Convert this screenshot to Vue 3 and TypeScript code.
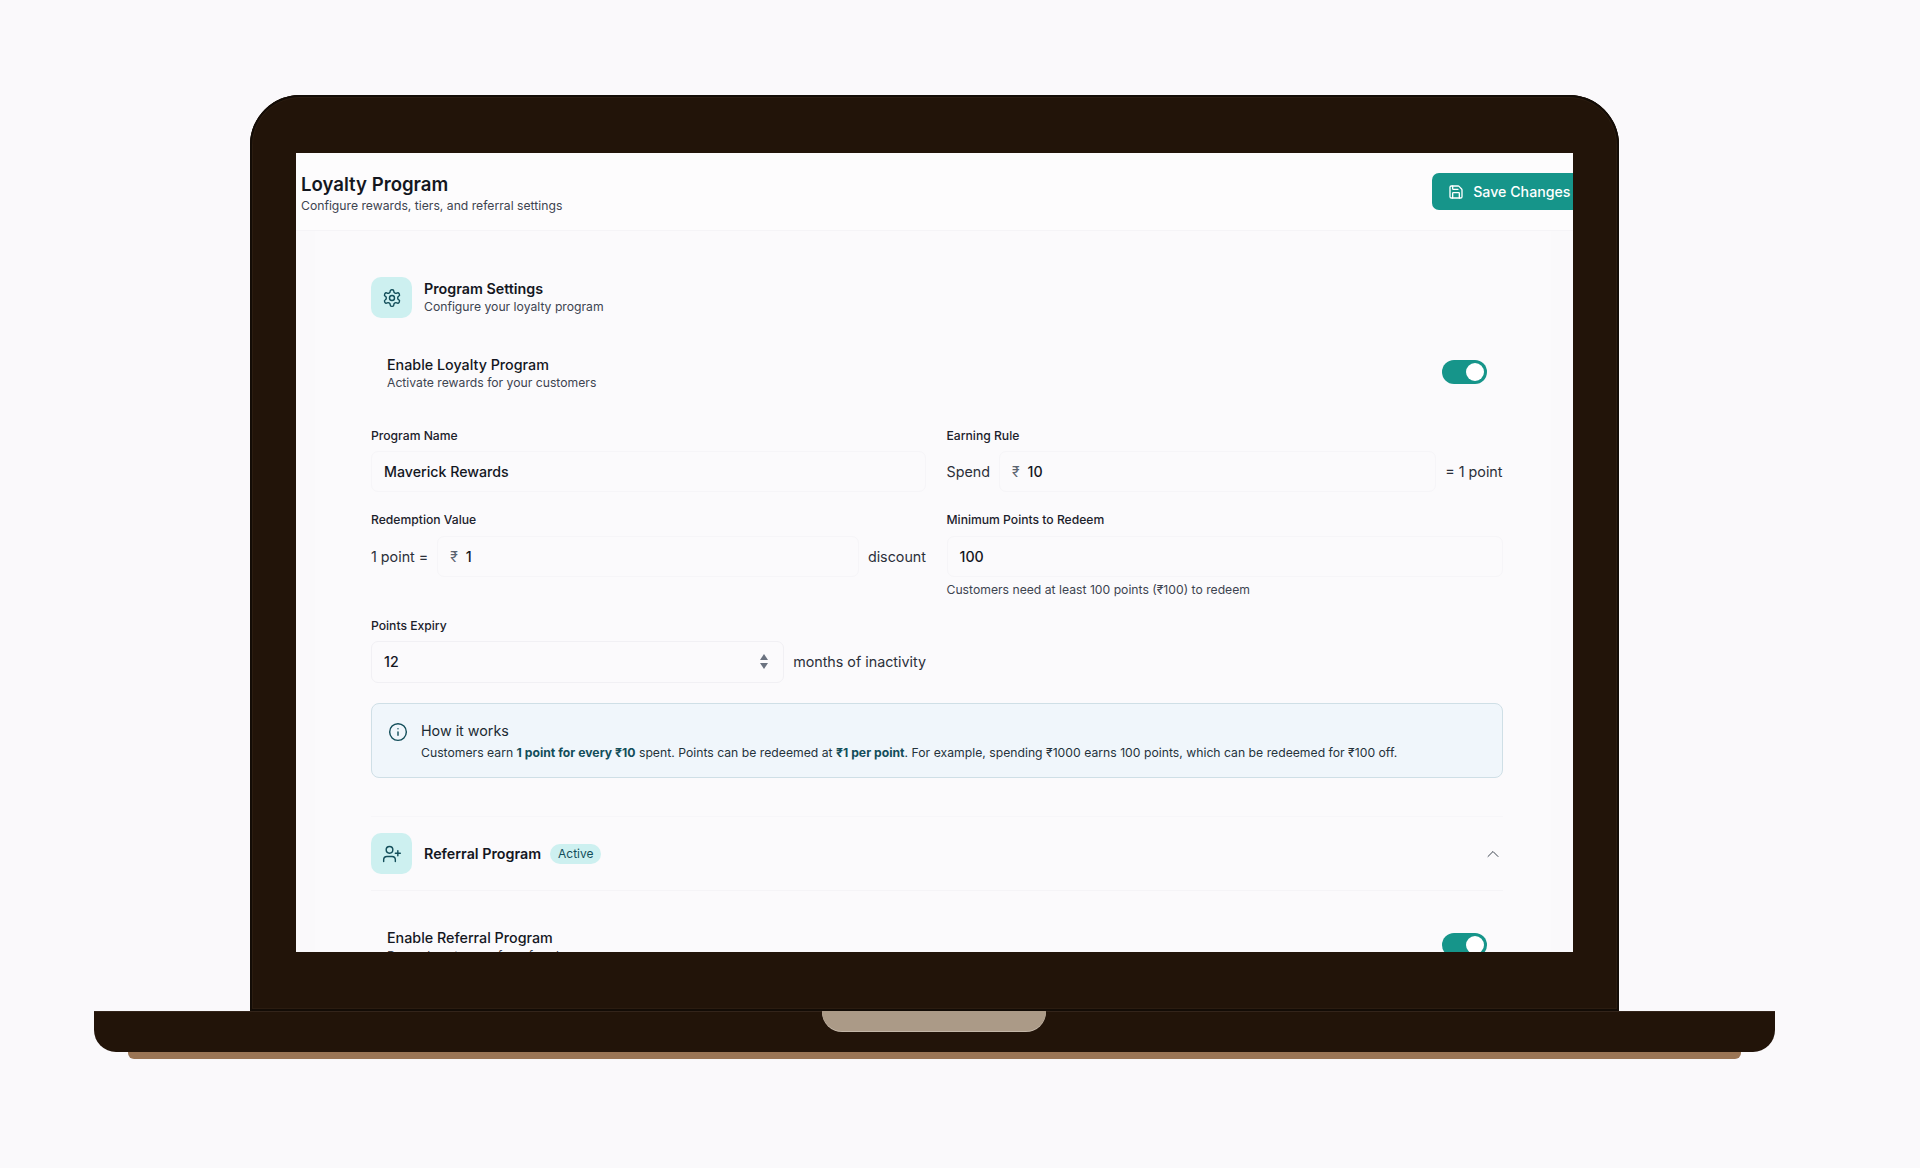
<script setup lang="ts">
const gear = "M12.22 2h-.44a2 2 0 0 0-2 2v.18a2 2 0 0 1-1 1.73l-.43.25a2 2 0 0 1-2 0l-.15-.08a2 2 0 0 0-2.73.73l-.22.38a2 2 0 0 0 .73 2.73l.15.1a2 2 0 0 1 1 1.72v.51a2 2 0 0 1-1 1.74l-.15.09a2 2 0 0 0-.73 2.73l.22.38a2 2 0 0 0 2.73.73l.15-.08a2 2 0 0 1 2 0l.43.25a2 2 0 0 1 1 1.73V20a2 2 0 0 0 2 2h.44a2 2 0 0 0 2-2v-.18a2 2 0 0 1 1-1.73l.43-.25a2 2 0 0 1 2 0l.15.08a2 2 0 0 0 2.73-.73l.22-.39a2 2 0 0 0-.73-2.73l-.15-.08a2 2 0 0 1-1-1.74v-.5a2 2 0 0 1 1-1.74l.15-.09a2 2 0 0 0 .73-2.73l-.22-.38a2 2 0 0 0-2.73-.73l-.15.08a2 2 0 0 1-2 0l-.43-.25a2 2 0 0 1-1-1.73V4a2 2 0 0 0-2-2z";
</script>

<template>
  <div class="page">
    <div class="laptop">
      <div class="lid">
        <div class="screen">
          <header class="top">
            <div>
              <h1>Loyalty Program</h1>
              <p>Configure rewards, tiers, and referral settings</p>
            </div>
            <button class="save">
              <svg viewBox="0 0 24 24" class="ic16">
                <path d="M15.2 3a2 2 0 0 1 1.4.6l3.8 3.8a2 2 0 0 1 .6 1.4V19a2 2 0 0 1-2 2H5a2 2 0 0 1-2-2V5a2 2 0 0 1 2-2z" />
                <path d="M17 21v-7a1 1 0 0 0-1-1H8a1 1 0 0 0-1 1v7" />
                <path d="M7 3v4a1 1 0 0 0 1 1h7" />
              </svg>
              Save Changes
            </button>
          </header>

          <main class="content">
            <section class="settings">
              <div class="sec-head">
                <span class="tile">
                  <svg viewBox="0 0 24 24" class="ic20"><path :d="gear" /><circle cx="12" cy="12" r="3" /></svg>
                </span>
                <div>
                  <h2>Program Settings</h2>
                  <p class="sub">Configure your loyalty program</p>
                </div>
              </div>

              <div class="enable">
                <div>
                  <h3>Enable Loyalty Program</h3>
                  <p class="sub">Activate rewards for your customers</p>
                </div>
                <span class="toggle"><i /></span>
              </div>

              <div class="grid">
                <div class="field">
                  <label>Program Name</label>
                  <div class="input"><b>Maverick Rewards</b></div>
                </div>
                <div class="field">
                  <label>Earning Rule</label>
                  <div class="line">
                    <span class="unit">Spend</span>
                    <div class="input grow"><em>₹</em><b>10</b></div>
                    <span class="unit small">= 1 point</span>
                  </div>
                </div>
                <div class="field">
                  <label>Redemption Value</label>
                  <div class="line">
                    <span class="unit">1 point =</span>
                    <div class="input grow"><em>₹</em><b>1</b></div>
                    <span class="unit">discount</span>
                  </div>
                </div>
                <div class="field">
                  <label>Minimum Points to Redeem</label>
                  <div class="input"><b>100</b></div>
                  <p class="hint">Customers need at least 100 points (₹100) to redeem</p>
                </div>
              </div>

              <div class="field expiry">
                <label>Points Expiry</label>
                <div class="line">
                  <div class="input grow strong">
                    <b>12</b>
                    <span class="spin"><i class="up" /><i class="down" /></span>
                  </div>
                  <span class="unit">months of inactivity</span>
                </div>
              </div>

              <div class="info">
                <svg viewBox="0 0 24 24" class="ic20 info-ic">
                  <circle cx="12" cy="12" r="10" /><path d="M12 16v-4" /><path d="M12 8h.01" />
                </svg>
                <div>
                  <h4>How it works</h4>
                  <p>Customers earn <strong>1 point for every ₹10</strong> spent. Points can be redeemed at <strong>₹1 per point</strong>. For example, spending ₹1000 earns 100 points, which can be redeemed for ₹100 off.</p>
                </div>
              </div>
            </section>

            <section class="referral">
              <div class="ref-head">
                <span class="tile">
                  <svg viewBox="0 0 24 24" class="ic20">
                    <path d="M16 21v-2a4 4 0 0 0-4-4H6a4 4 0 0 0-4 4v2" /><circle cx="9" cy="7" r="4" />
                    <path d="M19 8v6" /><path d="M22 11h-6" />
                  </svg>
                </span>
                <h2>Referral Program</h2>
                <span class="badge">Active</span>
                <svg viewBox="0 0 24 24" class="chev"><path d="m18 15-6-6-6 6" /></svg>
              </div>
              <div class="enable ref-enable">
                <div>
                  <h3>Enable Referral Program</h3>
                  <p class="sub">Reward customers for referrals</p>
                </div>
                <span class="toggle"><i /></span>
              </div>
            </section>
          </main>
        </div>
      </div>
      <div class="base">
        <span class="notch" />
      </div>
      <div class="foot" />
    </div>
  </div>
</template>

<style>
html, body { margin: 0; background: #faf9fb; }
</style>

<style scoped>
* { box-sizing: border-box; }
.page {
  width: 1920px;
  height: 1168px;
  overflow: hidden;
  padding: 95px 0 0 94px;
  background: #faf9fb;
  font-family: Inter, "Noto Sans", sans-serif;
  color: #14171f;
}
.laptop { width: 1681px; display: flex; flex-direction: column; align-items: center; }
.lid {
  align-self: flex-start;
  width: 1369px;
  height: 916px;
  margin-left: 156px;
  padding: 58px 46px 59px;
  background: #221409;
  border-radius: 50px 50px 0 0;
  box-shadow: inset 0 0 0 2px #130c06, inset 0 0 0 3px #2b1c10;
}
.screen { width: 1277px; height: 799px; overflow: hidden; background: #faf9fb; }
.base {
  width: 100%;
  height: 41px;
  display: flex;
  justify-content: center;
  background: #221409;
  border-radius: 0 0 22px 22px;
  border-top: 1px solid #33241a;
}
.notch {
  width: 224px;
  height: 20px;
  margin-top: -1px;
  margin-right: 1px;
  background: #ab9a87;
  border-radius: 0 0 20px 20px;
  box-shadow: 0 1px 0 #c4b7a8;
}
.foot { width: 1613px; height: 7px; background: #9a7555; border-radius: 0 0 6px 6px; }

.top {
  height: 78px;
  display: flex;
  justify-content: space-between;
  align-items: flex-start;
  padding: 19px 0 0 5px;
  margin-right: -13.5px;
  background: #fdfcfd;
  border-bottom: 1px solid #f5f4f7;
}
h1 { margin: 0; font-size: 18.6px; line-height: 24px; font-weight: 600; }
.top p { margin: 2px 0 0; font-size: 12.2px; line-height: 16px; color: #3d4450; }
.save {
  flex: none;
  height: 37px;
  margin-top: 1px;
  padding: 0 16px;
  display: flex;
  align-items: center;
  gap: 9px;
  border: 0;
  border-radius: 7px;
  background: #16958a;
  color: #fff;
  font: 500 14.2px Inter, sans-serif;
}
svg { fill: none; stroke: currentColor; stroke-width: 2; stroke-linecap: round; stroke-linejoin: round; flex: none; }
.ic16 { width: 16px; height: 16px; }
.ic20 { width: 20px; height: 20px; }

.content { margin: 0 22px 0 19px; padding: 0 48px 0 56px; background: #fbfafc; }
.settings { padding-top: 46px; border-bottom: 1px solid #f7f6f9; height: 586px; }
.sec-head { display: flex; align-items: center; gap: 12px; }
.tile {
  width: 41px;
  height: 41px;
  flex: none;
  display: flex;
  align-items: center;
  justify-content: center;
  border-radius: 10px;
  background: #cdf0f0;
  color: #134e5a;
}
.tile svg { stroke-width: 1.7; }
h2 { margin: 0; font-size: 14.3px; line-height: 18px; font-weight: 600; }
h3 { margin: 0; font-size: 14.3px; line-height: 18px; font-weight: 500; }
.sub { margin: 0; font-size: 12.2px; line-height: 17px; color: #3d4450; }
.enable {
  display: flex;
  justify-content: space-between;
  align-items: center;
  padding: 0 16px;
  margin-top: 38px;
}
.toggle {
  width: 45px;
  height: 24px;
  margin-bottom: 4px;
  padding: 3px;
  display: flex;
  justify-content: flex-end;
  border-radius: 12px;
  background: #16958a;
}
.toggle i { width: 18px; height: 18px; border-radius: 50%; background: #fff; }

.grid { display: grid; grid-template-columns: 555px 556px; column-gap: 20.5px; margin-top: 36.5px; }
.field label {
  display: block;
  height: 16px;
  margin-bottom: 7.5px;
  font-size: 12.15px;
  line-height: 16px;
  font-weight: 500;
  color: #1c212b;
}
.grid .field:nth-child(n + 3) { margin-top: 20px; }
.input {
  height: 41px;
  display: flex;
  align-items: center;
  padding: 0 12px;
  border: 1px solid #f6f5f8;
  border-radius: 7px;
  font-size: 14.2px;
}
.input b { font-weight: 500; }
.input em { font-style: normal; font-size: 14px; color: #5b6470; margin-right: 8px; }
.input.strong { height: 42px; border-color: #f1f0f4; }
.grow { flex: 1; min-width: 0; }
.line { display: flex; align-items: center; gap: 9px; }
.unit { font-size: 14.3px; color: #2b303a; white-space: nowrap; }
.hint { margin: 5.5px 0 0; font-size: 12.2px; line-height: 16px; color: #3d4450; }
.expiry { margin-top: 20px; width: 555px; }
.expiry label { margin-bottom: 6.5px; }
.spin { margin-left: auto; margin-right: 3px; display: flex; flex-direction: column; gap: 3px; }
.spin i { width: 0; height: 0; border-left: 4.5px solid transparent; border-right: 4.5px solid transparent; }
.spin .up { border-bottom: 6px solid #6b7280; }
.spin .down { border-top: 6px solid #6b7280; }

.info {
  height: 75px;
  margin-top: 20.5px;
  padding: 18px 16px;
  display: flex;
  gap: 13px;
  border: 1px solid #cfdfe6;
  border-radius: 8px;
  background: #f0f6fb;
  color: #134e5a;
}
.info-ic { stroke-width: 1.7; }
.info h4 { margin: 0; font-size: 14.3px; line-height: 18px; font-weight: 400; color: #1c2b33; }
.info p { margin: 3.5px 0 0; font-size: 12.2px; letter-spacing: 0.012px; line-height: 17px; color: #25333b; white-space: nowrap; }
.info strong { font-weight: 700; color: #134e5a; }

.ref-head {
  display: flex;
  align-items: center;
  height: 74px;
  border-bottom: 1px solid #f5f4f7;
}
.ref-head h2 { margin-left: 12px; }
.badge {
  margin-left: 9px;
  padding: 0 7px 0 8px;
  height: 20px;
  display: flex;
  align-items: center;
  border-radius: 10px;
  background: #cdf0f0;
  color: #134e5a;
  font-size: 12px;
}
.chev { width: 20px; height: 20px; margin-left: auto; color: #3d4450; stroke-width: 1.2; }
.ref-enable { margin-top: 38px; }
</style>
